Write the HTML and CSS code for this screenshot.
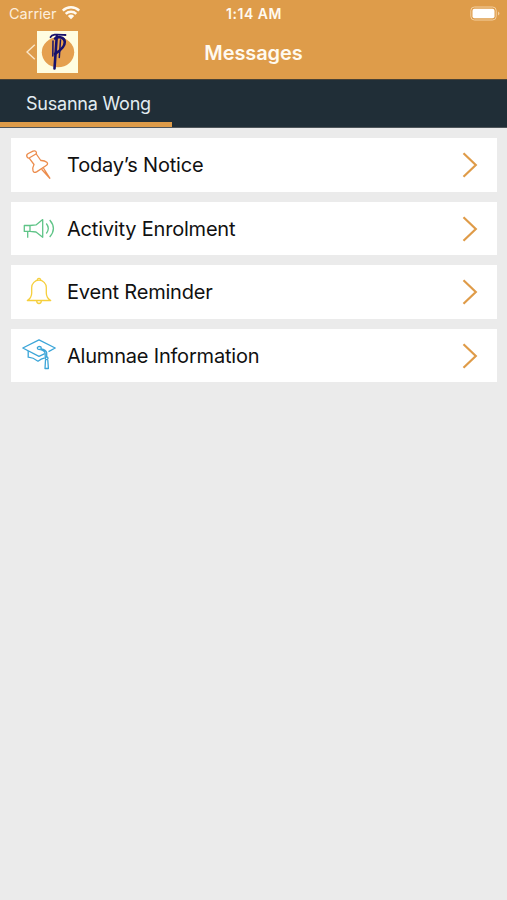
FILE: index.html
```html
<!DOCTYPE html>
<html lang="en">
<head>
	<meta charset="utf-8">
	<meta name="viewport" content="width=device-width, initial-scale=1">
	<title>Messages</title>
	<link rel="stylesheet" href="styles.css">
</head>
<body>
<header>
	<div class="status">
		<div class="carrier">
			<span>Carrier</span>
			<svg class="wifi" width="20" height="15" viewBox="0 0 20 15">
				<path d="M1.8 5.6a12 12 0 0 1 16.4 0M4.7 8.8a7.8 7.8 0 0 1 10.6 0" fill="none" stroke="#fffaf0" stroke-width="2.5"/>
				<path d="M6.8 10.9a4.8 4.8 0 0 1 6.4 0L10 14.2z" fill="#fffaf0"/>
			</svg>
		</div>
		<span class="time">1:14 AM</span>
		<svg class="battery" width="32" height="16" viewBox="0 0 32 16">
			<rect x=".8" y="1" width="25.4" height="13" rx="3.6" fill="none" stroke="#f3cf9f"/>
			<rect x="2.5" y="2.7" width="22" height="9.6" rx="2" fill="#fff"/>
			<path d="M28 5.5q3 2 0 4z" fill="#f3cf9f"/>
		</svg>
	</div>
	<div class="nav">
		<a class="back" href="#">
			<svg width="10" height="16" viewBox="0 0 10 16">
				<path d="M8.8 .8L1 8l7.8 7.2" fill="none" stroke="#fbe6c8" stroke-width="1.4"/>
			</svg>
			<svg class="logo" width="41" height="42" viewBox="0 0 41 42">
				<rect width="41" height="42" fill="#fffde0"/>
				<ellipse cx="21" cy="21.3" rx="16.2" ry="15" fill="#e5a04f"/>
				<g fill="none" stroke="#17116b" stroke-linecap="round" stroke-linejoin="round">
					<path d="M13.5 6.2C15 2.8 20 3.5 28.5 4" stroke-width="1.8"/>
					<path d="M18 7.5c3.500-2.500 9.500-1.500 9.800 3.300.2 4.700-5 9-9.800 12" stroke-width="2.600"/>
					<path d="M19.800 5l-2.300 32.500" stroke-width="2.600"/>
					<path d="M16 10l-.2 15M23.500 9l-1.200 17.500" stroke-width="1.500"/>
				</g>
			</svg>
		</a>
		<h1>Messages</h1>
	</div>
</header>

<nav class="tabs">
	<a class="tab active" href="#">Susanna Wong</a>
</nav>

<main>
	<a class="item" href="#">
		<svg class="icon pin" viewBox="0 0 34 34">
			<path d="M5 8.800q-1-2 1.300-3.300l4.700-2.300q2.500-1 3.300.8.700 1.300-.8 2.300L7.500 9.800q-1.700.8-2.500-1z"/>
			<path d="M7.200 10.200L12 16.500q-1.800 3.300-1 6.200.8 2.600 3.600 1.200l10-6.700q1.800-1.600.2-3-2.300-1.900-6-1.700L14.300 6"/>
			<path d="M19.600 21.200l8.200 9-6.400-10.200"/>
		</svg>
		<span>Today’s Notice</span>
		<svg class="arrow" viewBox="0 0 16 26"><path d="M1.500 1.300L13.800 13 1.500 24.700"/></svg>
	</a>
	<a class="item" href="#">
		<svg class="icon horn" viewBox="0 0 34 34">
			<path d="M2.300 13.500h5.700v5.900H2.300zM8 13.500l6-.6 6.700-5.300v17.700L14 20l-6-.6M5.700 19.400v6.400"/>
			<path d="M24.300 11.500q4 5 0 10M27.700 8q7.400 8.500 0 17"/>
		</svg>
		<span>Activity Enrolment</span>
		<svg class="arrow" viewBox="0 0 16 26"><path d="M1.500 1.300L13.800 13 1.500 24.700"/></svg>
	</a>
	<a class="item" href="#">
		<svg class="icon bell" viewBox="0 0 34 34">
			<path d="M5.300 25.500h23.400q-4.400-2.800-4.400-7.500v-5.500a7.300 7.300 0 0 0-14.600 0V18q0 4.700-4.400 7.500z"/>
			<path d="M15.300 5.300q0-2 1.700-2t1.700 2M14.700 25.700q0 2.800 2.300 2.800t2.300-2.800"/>
		</svg>
		<span>Event Reminder</span>
		<svg class="arrow" viewBox="0 0 16 26"><path d="M1.500 1.300L13.800 13 1.500 24.700"/></svg>
	</a>
	<a class="item" href="#">
		<svg class="icon cap" viewBox="0 0 34 34">
			<path d="M22.800 14.600L17 17.300.8 9 17 .9 33.200 9l-6.700 3.600"/>
			<path d="M6.200 12v6.200q5 .3 9.800 4 3-2.500 6.700-3.400"/>
			<ellipse cx="17.300" cy="9" rx="2" ry="1.500"/>
			<path d="M19 9.800q5 .8 5.700 3.800v5M18.300 10.500q4.500 1 4.900 4v3.800"/>
			<circle cx="24.600" cy="19.300" r="1.400"/>
			<path d="M23.500 21l-.5 8.500h3.400L25.800 21"/>
		</svg>
		<span>Alumnae Information</span>
		<svg class="arrow" viewBox="0 0 16 26"><path d="M1.500 1.300L13.800 13 1.500 24.700"/></svg>
	</a>
</main>
</body>
</html>
```

FILE: styles.css
```css
*, *::before,
*::after{
	box-sizing: border-box;
}
body{
	margin: 0;
	min-height: 100vh;
	background: #ebebeb;
	font-family: Inter, "Liberation Sans", sans-serif;
	overflow-x: hidden;
}
a{
	color: inherit;
	text-decoration: none;
}
svg{
	display: block;
	flex: none;
}
header{
	height: 79px;
	background: #de9c4a;
	color: #fffaf0;
}
.status{
	display: grid;
	grid-template-columns: 1fr auto 1fr;
	align-items: center;
	height: 27px;
	padding: 0 5px 0 9px;
	font-size: 14.5px;
}
.carrier{
	display: flex;
	align-items: center;
	gap: 4px;
	color: #fdeedb;
}
.wifi{
	margin-top: -2px;
}
.time{
	margin-right: 3px;
	font-size: 14px;
	font-weight: 600;
	letter-spacing: 0.5px;
}
.battery{
	justify-self: end;
}
.nav{
	display: grid;
	grid-template-columns: 1fr auto 1fr;
	align-items: center;
	height: 50px;
}
.back{
	display: flex;
	align-items: center;
	gap: 1px;
	padding-left: 26px;
}
h1{
	margin: 1px 0 0;
	font-size: 20px;
	font-weight: 600;
	letter-spacing: -0.1px;
}
.tabs{
	display: flex;
	height: 49px;
	background: #202e37;
	border-top: 1px solid #4a4234;
	border-bottom: 1px solid #4f565b;
}
.tab{
	width: 172px;
	padding: 13px 0 0 26px;
	border-bottom: 5px solid transparent;
	color: #e3edf2;
	font-size: 18px;
	line-height: 22px;
	letter-spacing: -0.22px;
	white-space: nowrap;
}
.active{
	border-bottom-color: #dd9b49;
}
main{
	display: flex;
	flex-direction: column;
	gap: 10px;
	padding: 10px 10px 0 11px;
}
.item{
	display: flex;
	align-items: center;
	height: 53.5px;
	padding: 1px 19.5px 0 11px;
	background: #fff;
	color: #111;
	font-size: 20px;
	letter-spacing: -0.2px;
}
.item span{
	flex: 1;
	margin-left: 11px;
}
.icon{
	width: 34px;
	height: 34px;
	fill: none;
	stroke-width: 1.3;
	stroke-linejoin: round;
}
.pin{
	stroke: #ec8c4c;
}
.horn{
	stroke: #5fc487;
}
.bell{
	stroke: #f6cf3c;
}
.cap{
	stroke: #3ba5d8;
}
.arrow{
	width: 16px;
	height: 26px;
	fill: none;
	stroke: #df9b48;
	stroke-width: 2.2;
}
```
